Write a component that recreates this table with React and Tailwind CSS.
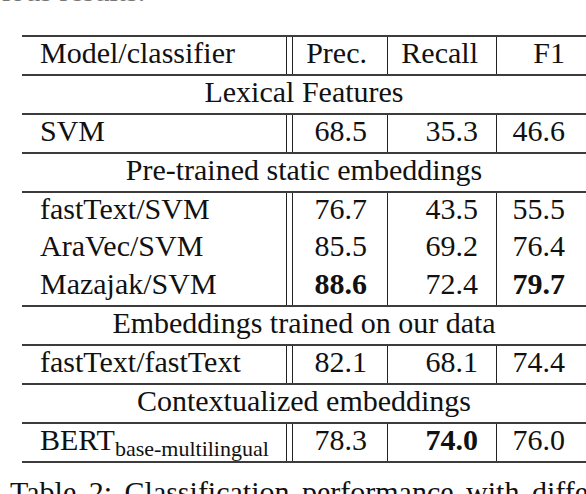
import React from "react";

const groups = [
  { title: "Lexical Features", rows: [{ name: "SVM", p: "68.5", r: "35.3", f: "46.6" }] },
  {
    title: "Pre-trained static embeddings",
    rows: [
      { name: "fastText/SVM", p: "76.7", r: "43.5", f: "55.5" },
      { name: "AraVec/SVM", p: "85.5", r: "69.2", f: "76.4" },
      { name: "Mazajak/SVM", p: "88.6", r: "72.4", f: "79.7", bp: true, bf: true },
    ],
  },
  {
    title: "Embeddings trained on our data",
    rows: [{ name: "fastText/fastText", p: "82.1", r: "68.1", f: "74.4" }],
  },
  {
    title: "Contextualized embeddings",
    rows: [{ name: "BERT", sub: "base-multilingual", p: "78.3", r: "74.0", f: "76.0", br: true }],
  },
];

const Row = ({ cells, h }) => (
  <div className={`flex ${h}`}>
    <div className="w-[265px] pl-[18px] leading-[31px] border-r border-[#222] whitespace-nowrap">{cells[0]}</div>
    <div className="w-[6px] border-r border-[#222]" />
    <div className="w-[95px] pr-[20px] text-right leading-[31px] border-r border-[#222]">{cells[1]}</div>
    <div className="w-[109px] pr-[18px] text-right leading-[31px] border-r border-[#222]">{cells[2]}</div>
    <div className="flex-1 pr-[21px] text-right leading-[31px]">{cells[3]}</div>
  </div>
);

export default function App() {
  return (
    <div className="w-[586px] h-[494px] overflow-hidden bg-white font-serif">
      <div className="text-[#111] text-[30px] font-[family-name:Liberation_Serif,serif]">
        <div className="-mt-[25px] h-[60px] leading-[31px] text-[#777] whitespace-nowrap pl-[2px]">ious results.</div>

        <div className="ml-[22px] border-t-2 border-[#3c3c3c]">
          <div className="border-b-2 border-[#3c3c3c]">
            <Row h="h-[37px]" cells={["Model/classifier", "Prec.", "Recall", "F1"]} />
          </div>
          {groups.map((g) => (
            <div key={g.title}>
              <div className="h-[39px] leading-[31px] text-center border-b-2 border-[#3c3c3c]">{g.title}</div>
              <div className="border-b-2 border-[#3c3c3c]">
                {g.rows.map((r, i) => (
                  <Row
                    key={r.name}
                    h={g.rows.length === 3 && i === 1 ? "h-[38px]" : "h-[37px]"}
                    cells={[
                      <span>
                        {r.name}
                        {r.sub && <sub className="text-[22px]">{r.sub}</sub>}
                      </span>,
                      <span className={r.bp ? "font-bold" : ""}>{r.p}</span>,
                      <span className={r.br ? "font-bold" : ""}>{r.r}</span>,
                      <span className={r.bf ? "font-bold" : ""}>{r.f}</span>,
                    ]}
                  />
                ))}
              </div>
            </div>
          ))}
        </div>

        <div className="mt-[13px] pl-[10px] leading-[31px] whitespace-nowrap [word-spacing:5px]">
          Table 2: Classification performance with different
        </div>
      </div>
    </div>
  );
}
